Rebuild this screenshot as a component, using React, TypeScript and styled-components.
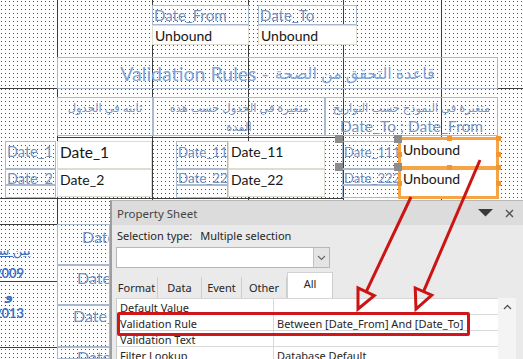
import React from "react";
import styled, { createGlobalStyle, css } from "styled-components";

const Global = createGlobalStyle`
  html, body { margin: 0; padding: 0; background: #fff; }
  body { width: 523px; height: 359px; overflow: hidden; }
`;

interface P {
  $x: number;
  $y: number;
  $w: number;
  $h: number;
}

const placed = css<P>`
  position: absolute;
  left: ${(p) => p.$x}px;
  top: ${(p) => p.$y}px;
  width: ${(p) => p.$w}px;
  height: ${(p) => p.$h}px;
  box-sizing: border-box;
`;

/* ---------- design canvas ---------- */

const Canvas = styled.div`
  position: relative;
  width: 523px;
  height: 359px;
  overflow: hidden;
  background-color: #fff;
  background-image: conic-gradient(from 0deg at 1px 1px, transparent 75%, #505050 0);
  background-size: 4px 4px;
  background-position: 1px 1px;
  font-family: Lato, "DejaVu Sans", sans-serif;
`;

const HLine = styled.div<{ $x: number; $y: number; $w: number; $c?: string }>`
  position: absolute;
  left: ${(p) => p.$x}px;
  top: ${(p) => p.$y}px;
  width: ${(p) => p.$w}px;
  height: 1px;
  background: ${(p) => p.$c ?? "#3d3d3d"};
`;

const VLine = styled.div<{ $x: number; $y: number; $h: number; $c?: string }>`
  position: absolute;
  left: ${(p) => p.$x}px;
  top: ${(p) => p.$y}px;
  width: 1px;
  height: ${(p) => p.$h}px;
  background: ${(p) => p.$c ?? "#3d3d3d"};
`;

const LabelBox = styled.div<
  P & { $fs?: number; $pl?: number; $lh?: number; $clip?: boolean }
>`
  ${placed}
  border: 1px solid #a9b9cf;
  color: #7191be;
  font-size: ${(p) => p.$fs ?? 14}px;
  line-height: ${(p) => p.$lh ?? 20}px;
  padding-left: ${(p) => p.$pl ?? 1}px;
  white-space: nowrap;
  overflow: ${(p) => (p.$clip ? "hidden" : "visible")};
`;

const TitleBox = styled.div<P>`
  ${placed}
  border: 1px solid #a9b9cf;
  color: #80a4d6;
  font-size: 19.5px;
  display: flex;
  align-items: center;
  justify-content: center;
  gap: 6px;
  white-space: nowrap;
`;

const TitleArabic = styled.span`
  font-size: 16px;
`;

const HeaderBox = styled.div<P>`
  ${placed}
  border: 1px solid #a9b9cf;
  color: #7995c0;
  font-size: 11.5px;
  line-height: 19px;
  text-align: center;
  white-space: nowrap;
  overflow: hidden;
`;

const HeaderLatin = styled.div`
  font-size: 15.5px;
  line-height: 18px;
`;

const TextBox = styled.div<P & { $fs?: number }>`
  ${placed}
  background: #fff;
  border: 1px solid #e0dccf;
  color: #161616;
  font-size: ${(p) => p.$fs ?? 14}px;
  line-height: 20px;
  padding-left: 2px;
  white-space: nowrap;
  overflow: hidden;
`;

const SideNote = styled.div`
  position: absolute;
  left: -26px;
  top: 240px;
  width: 70px;
  display: flex;
  flex-direction: column;
  align-items: center;
  color: #3f6fbf;
  font-size: 13px;
`;

const NoteLine = styled.div<{ $h: number; $under?: boolean }>`
  height: ${(p) => p.$h}px;
  line-height: ${(p) => p.$h}px;
  text-decoration: ${(p) => (p.$under ? "underline" : "none")};
  font-weight: ${(p) => (p.$under ? "normal" : "bold")};
`;

const MoveHandle = styled.div<{ $x: number; $y: number }>`
  position: absolute;
  left: ${(p) => p.$x}px;
  top: ${(p) => p.$y}px;
  width: 8px;
  height: 8px;
  background: #8c8c8c;
`;

const SelectFrame = styled.div<P>`
  ${placed}
  border: 3px solid #f6a546;
`;

const SizeHandle = styled.div<{ $x: number; $y: number }>`
  position: absolute;
  left: ${(p) => p.$x - 2}px;
  top: ${(p) => p.$y - 2}px;
  width: 5px;
  height: 5px;
  background: #f29532;
`;

/* ---------- property sheet ---------- */

const Sheet = styled.div`
  position: absolute;
  left: 110px;
  top: 200px;
  width: 413px;
  height: 159px;
  box-sizing: border-box;
  border-left: 2px solid #9e9e9e;
  border-top: 1px solid #b9b9b9;
  background: #eaeaea;
  display: flex;
  flex-direction: column;
  font-family: "Noto Sans", sans-serif;
  font-size: 11px;
  color: #262626;
`;

const SheetTitle = styled.div`
  height: 24px;
  flex: none;
  background: #dcdcdc;
  display: flex;
  align-items: center;
  justify-content: space-between;
  padding: 0 9px 0 5px;
  color: #444;
  font-size: 11.5px;
`;

const TitleTools = styled.div`
  display: flex;
  align-items: center;
  gap: 12px;
`;

const SelectionRow = styled.div`
  height: 21px;
  flex: none;
  display: flex;
  align-items: center;
  padding-left: 5px;
  gap: 8px;
`;

const Combo = styled.div`
  flex: none;
  margin: 1px 0 0 4px;
  width: 214px;
  height: 21px;
  box-sizing: border-box;
  background: #fff;
  border: 1px solid #b7b7b7;
  display: flex;
  justify-content: flex-end;
`;

const ComboButton = styled.div`
  width: 16px;
  height: 100%;
  box-sizing: border-box;
  background: #e4e4e4;
  border-left: 1px solid #c2c2c2;
  display: flex;
  align-items: center;
  justify-content: center;
`;

const Tabs = styled.div`
  flex: none;
  margin: 4px 0 0 4px;
  height: 26px;
  display: flex;
  align-items: flex-end;
`;

const Tab = styled.div<{ $w: number; $active?: boolean }>`
  width: ${(p) => p.$w}px;
  box-sizing: border-box;
  height: ${(p) => (p.$active ? 26 : 21)}px;
  display: flex;
  align-items: center;
  justify-content: center;
  padding-bottom: ${(p) => (p.$active ? 5 : 0)}px;
  background: ${(p) => (p.$active ? "#fff" : "transparent")};
  border-right: 1px solid #cdcdcd;
  border-top: ${(p) => (p.$active ? "1px solid #d2d2d2" : "none")};
  border-left: ${(p) => (p.$active ? "1px solid #d2d2d2" : "none")};
`;

const GridArea = styled.div`
  flex: 1;
  margin-left: 4px;
  display: flex;
  min-height: 0;
`;

const PropGrid = styled.div`
  width: 381px;
  background: #fff;
  border-left: 1px solid #c9c9c9;
  border-top: 1px solid #d6d6d6;
  display: flex;
  flex-direction: column;
`;

const PropRow = styled.div`
  height: 15px;
  flex: none;
  display: flex;
  border-bottom: 1px solid #d8d8d8;
`;

const PropName = styled.div`
  width: 153px;
  flex: none;
  padding-left: 3px;
  line-height: 17px;
  border-right: 1px solid #d8d8d8;
  white-space: nowrap;
  overflow: hidden;
`;

const PropValue = styled.div`
  flex: 1;
  padding-left: 3px;
  line-height: 17px;
  white-space: nowrap;
  overflow: hidden;
`;

const ScrollBar = styled.div`
  width: 18px;
  background: #f4f4f4;
  display: flex;
  justify-content: center;
  padding-top: 6px;
  box-sizing: border-box;
`;

/* ---------- overlays ---------- */

const RedFrame = styled.div<P>`
  ${placed}
  border: 3px solid #d0161b;
  border-radius: 2px;
`;

const ArrowLayer = styled.svg`
  position: absolute;
  left: 0;
  top: 0;
  pointer-events: none;
`;

/* ---------- data ---------- */

const darkV = [
  { x: 57, y: 0, h: 359 },
  { x: 152, y: 0, h: 200 },
  { x: 248, y: 0, h: 200 },
  { x: 343, y: 0, h: 200 },
  { x: 441, y: 0, h: 200 },
];

const darkH = [
  { x: 57, y: 57, w: 440 },
  { x: 0, y: 88, w: 523 },
  { x: 57, y: 137, w: 286 },
  { x: 0, y: 198, w: 343 },
  { x: 0, y: 224, w: 110 },
  { x: 0, y: 281, w: 57 },
  { x: 0, y: 347, w: 110 },
];

const labels = [
  { x: 152, y: 5, w: 97, h: 20, t: "Date_From", fs: 15, lh: 18 },
  { x: 258, y: 5, w: 99, h: 20, t: "Date_To", fs: 15, lh: 18 },
  { x: 5, y: 141, w: 51, h: 28, t: "Date_1", fs: 14.5 },
  { x: 5, y: 169, w: 51, h: 16, t: "Date_2", fs: 14.5, lh: 17 },
  { x: 5, y: 185, w: 51, h: 13, t: "" },
  { x: 176, y: 141, w: 52, h: 28, t: "Date_11", fs: 13.3 },
  { x: 176, y: 169, w: 52, h: 16, t: "Date_22", fs: 13.3, lh: 17 },
  { x: 176, y: 185, w: 52, h: 13, t: "" },
  { x: 342, y: 141, w: 58, h: 28, t: "Date_111", fs: 13 },
  { x: 342, y: 169, w: 58, h: 16, t: "Date_222", fs: 13, lh: 17 },
  { x: 342, y: 185, w: 58, h: 13, t: "" },
  { x: 57, y: 224, w: 53, h: 41, t: "Date", fs: 16, lh: 24, pl: 24, clip: true },
  { x: 57, y: 265, w: 53, h: 40, t: "Date", fs: 16, lh: 24, pl: 19, clip: true },
  { x: 57, y: 305, w: 53, h: 42, t: "Date_", fs: 16, lh: 20, pl: 15, clip: true },
  { x: 57, y: 347, w: 53, h: 12, t: "Date", fs: 16, lh: 18, pl: 19, clip: true },
];

const textBoxes = [
  { x: 152, y: 25, w: 97, h: 20, t: "Unbound", fs: 14 },
  { x: 258, y: 25, w: 99, h: 20, t: "Unbound", fs: 14 },
  { x: 57, y: 141, w: 95, h: 28, t: "Date_1", fs: 15.5 },
  { x: 57, y: 169, w: 95, h: 28, t: "Date_2", fs: 14 },
  { x: 228, y: 141, w: 97, h: 28, t: "Date_11", fs: 14 },
  { x: 228, y: 169, w: 97, h: 28, t: "Date_22", fs: 14 },
  { x: 400, y: 139, w: 98, h: 29, t: "Unbound", fs: 14 },
  { x: 400, y: 168, w: 98, h: 30, t: "Unbound", fs: 14 },
];

const frames = [
  { x: 398, y: 137, w: 101, h: 33 },
  { x: 398, y: 166, w: 101, h: 33 },
];

const moveHandles = [
  { x: 335, y: 135 },
  { x: 394, y: 135 },
  { x: 335, y: 163 },
  { x: 394, y: 163 },
];

const sizeHandles = frames.flatMap((f) => [
  { x: f.x + f.w / 2, y: f.y + 1 },
  { x: f.x + f.w - 1, y: f.y + f.h / 2 },
  { x: f.x + 1, y: f.y + f.h / 2 },
  { x: f.x + f.w - 1, y: f.y + 1 },
]);

const tabs = [
  { t: "Format", w: 42 },
  { t: "Data", w: 44 },
  { t: "Event", w: 40 },
  { t: "Other", w: 45 },
  { t: "All", w: 46, active: true },
];

const props = [
  { n: "Default Value", v: "" },
  { n: "Validation Rule", v: "Between [Date_From] And [Date_To]" },
  { n: "Validation Text", v: "" },
  { n: "Filter Lookup", v: "Database Default" },
];

function arrow(x1: number, y1: number, x2: number, y2: number) {
  const dx = x2 - x1;
  const dy = y2 - y1;
  const len = Math.hypot(dx, dy);
  const ux = dx / len;
  const uy = dy / len;
  const bx = x2 - ux * 19;
  const by = y2 - uy * 19;
  const px = -uy * 9;
  const py = ux * 9;
  return {
    line: `M${x1} ${y1} L${bx} ${by}`,
    head: `${bx + px},${by + py} ${x2},${y2} ${bx - px},${by - py}`,
  };
}

const arrows = [arrow(411, 197, 358, 309), arrow(480, 160, 416, 309)];

export default function App() {
  return (
    <>
      <Global />
      <Canvas>
        {darkV.map((l, i) => (
          <VLine key={"v" + i} $x={l.x} $y={l.y} $h={l.h} />
        ))}
        {darkH.map((l, i) => (
          <HLine key={"h" + i} $x={l.x} $y={l.y} $w={l.w} />
        ))}

        <TitleBox $x={57} $y={57} $w={441} $h={32}>
          <span>Validation Rules -</span>
          <TitleArabic>قاعدة التحقق من الصحة</TitleArabic>
        </TitleBox>

        <HeaderBox $x={57} $y={97} $w={96} $h={39}>
          ثابته في الجدول
        </HeaderBox>
        <HeaderBox $x={153} $y={97} $w={172} $h={39}>
          <div>متغيرة في الجدول حسب هذه</div>
          <div>المدة</div>
        </HeaderBox>
        <HeaderBox $x={325} $y={97} $w={173} $h={39}>
          <div>متغيرة في النموذج حسب التواريخ</div>
          <HeaderLatin>Date_To ; Date_From</HeaderLatin>
        </HeaderBox>

        {labels.map((l, i) => (
          <LabelBox
            key={"l" + i}
            $x={l.x}
            $y={l.y}
            $w={l.w}
            $h={l.h}
            $fs={l.fs}
            $lh={l.lh}
            $pl={l.pl}
            $clip={l.clip}
          >
            {l.t}
          </LabelBox>
        ))}

        {textBoxes.map((b, i) => (
          <TextBox key={"t" + i} $x={b.x} $y={b.y} $w={b.w} $h={b.h} $fs={b.fs}>
            {b.t}
          </TextBox>
        ))}

        <SideNote>
          <NoteLine $h={20} $under>
            بين سنة
          </NoteLine>
          <NoteLine $h={26}>2009</NoteLine>
          <NoteLine $h={18}>و</NoteLine>
          <NoteLine $h={18}>2013</NoteLine>
        </SideNote>

        {frames.map((f, i) => (
          <SelectFrame key={"f" + i} $x={f.x} $y={f.y} $w={f.w} $h={f.h} />
        ))}
        {sizeHandles.map((h, i) => (
          <SizeHandle key={"s" + i} $x={h.x} $y={h.y} />
        ))}
        {moveHandles.map((h, i) => (
          <MoveHandle key={"m" + i} $x={h.x} $y={h.y} />
        ))}

        <Sheet>
          <SheetTitle>
            <span>Property Sheet</span>
            <TitleTools>
              <svg width="15" height="8" viewBox="0 0 15 8">
                <polygon points="0,0 15,0 7.5,7.5" fill="#3a3a3a" />
              </svg>
              <svg width="9" height="9" viewBox="0 0 9 9">
                <path d="M1 1 L8 8 M8 1 L1 8" stroke="#555" strokeWidth="1.4" />
              </svg>
            </TitleTools>
          </SheetTitle>
          <SelectionRow>
            <span>Selection type:</span>
            <span>Multiple selection</span>
          </SelectionRow>
          <Combo>
            <ComboButton>
              <svg width="9" height="6" viewBox="0 0 9 6">
                <path d="M1 1 L4.5 4.5 L8 1" stroke="#666" strokeWidth="1.1" fill="none" />
              </svg>
            </ComboButton>
          </Combo>
          <Tabs>
            {tabs.map((t) => (
              <Tab key={t.t} $w={t.w} $active={t.active}>
                {t.t}
              </Tab>
            ))}
          </Tabs>
          <GridArea>
            <PropGrid>
              {props.map((p) => (
                <PropRow key={p.n}>
                  <PropName>{p.n}</PropName>
                  <PropValue>{p.v}</PropValue>
                </PropRow>
              ))}
            </PropGrid>
            <ScrollBar>
              <svg width="9" height="6" viewBox="0 0 9 6">
                <path d="M1 5 L4.5 1.5 L8 5" stroke="#555" strokeWidth="1.3" fill="none" />
              </svg>
            </ScrollBar>
          </GridArea>
        </Sheet>

        <RedFrame $x={117} $y={312} $w={353} $h={24} />

        <ArrowLayer width="523" height="359" viewBox="0 0 523 359">
          {arrows.map((a, i) => (
            <g key={i} stroke="#cc1414" strokeWidth="3" fill="none">
              <path d={a.line} />
              <polygon points={a.head} strokeLinejoin="miter" />
            </g>
          ))}
        </ArrowLayer>
      </Canvas>
    </>
  );
}
